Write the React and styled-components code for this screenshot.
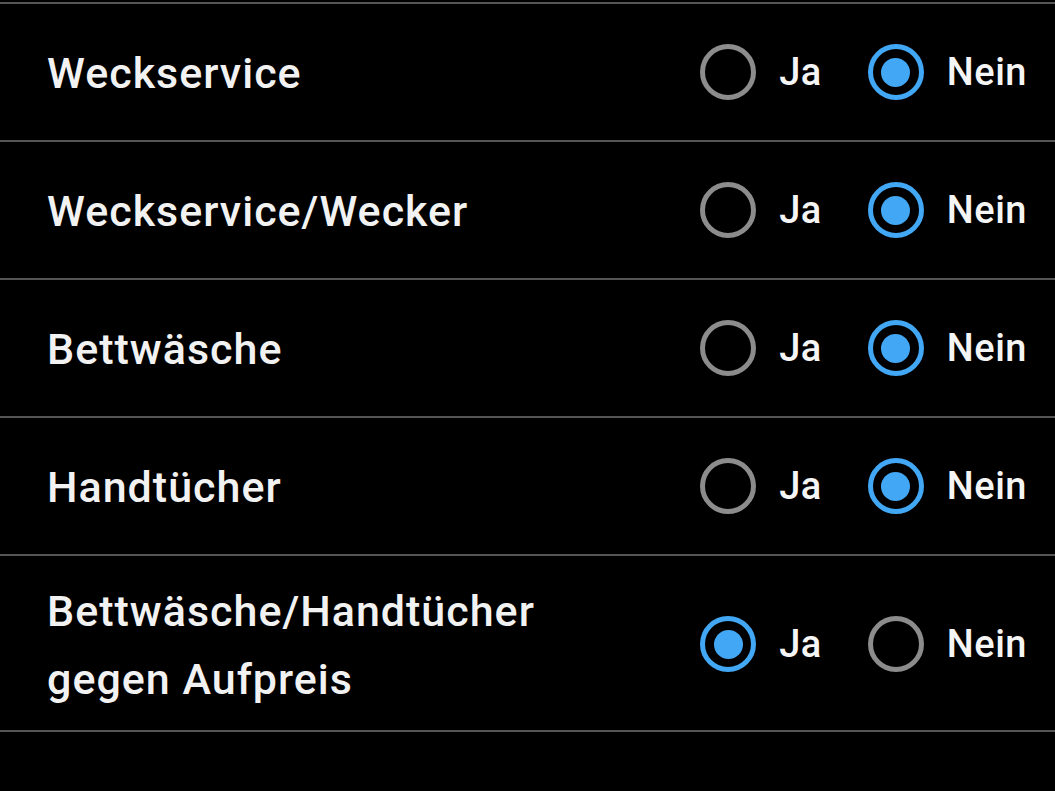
import React, { useState } from "react";
import styled, { createGlobalStyle } from "styled-components";

const Global = createGlobalStyle`
  html, body { margin: 0; padding: 0; background: #000; }
  body { font-family: Roboto, "Noto Sans", sans-serif; }
`;

const List = styled.div`
  padding-top: 2px;
  background: #000;
`;

const Row = styled.div`
  display: flex;
  align-items: center;
  justify-content: space-between;
  min-height: 138px;
  border-top: 2px solid #555;
  padding: 0 28px 0 47px;
  box-sizing: border-box;
  &:last-child { border-bottom: 2px solid #555; min-height: 178px; padding-top: 2px; }
`;

const Label = styled.div`
  color: #f2f2f2;
  font-size: 43px;
  font-weight: 500;
  line-height: 68px;
  letter-spacing: 1px;
  padding-top: 2px;
`;

const Group = styled.div`
  display: flex;
  align-items: center;
  gap: 46px;
`;

const Option = styled.label`
  display: flex;
  align-items: center;
  gap: 23px;
  cursor: pointer;
`;

const Circle = styled.span`
  width: 56px;
  height: 56px;
  box-sizing: border-box;
  border-radius: 50%;
  border: 5px solid ${p => (p.$on ? "#42a7f5" : "#8c8c8c")};
  display: flex;
  align-items: center;
  justify-content: center;
  &::after {
    content: "";
    width: 29px;
    height: 29px;
    border-radius: 50%;
    background: #42a7f5;
    display: ${p => (p.$on ? "block" : "none")};
  }
`;

const OptText = styled.span`
  color: #f5f5f5;
  font-size: 38px;
  font-weight: 500;
  letter-spacing: 0.5px;
`;

const items = [
  { label: ["Weckservice"], v: false },
  { label: ["Weckservice/Wecker"], v: false },
  { label: ["Bettwäsche"], v: false },
  { label: ["Handtücher"], v: false },
  { label: ["Bettwäsche/Handtücher", "gegen Aufpreis"], v: true },
];

export default function App() {
  const [vals, setVals] = useState(items.map(i => i.v));
  const set = (i, v) => setVals(vs => vs.map((x, j) => (j === i ? v : x)));
  return (
    <>
      <Global />
      <List>
        {items.map((it, i) => (
          <Row key={i}>
            <Label>
              {it.label.map((l, k) => (
                <div key={k}>{l}</div>
              ))}
            </Label>
            <Group>
              <Option onClick={() => set(i, true)}>
                <Circle $on={vals[i]} />
                <OptText>Ja</OptText>
              </Option>
              <Option onClick={() => set(i, false)}>
                <Circle $on={!vals[i]} />
                <OptText>Nein</OptText>
              </Option>
            </Group>
          </Row>
        ))}
      </List>
    </>
  );
}
